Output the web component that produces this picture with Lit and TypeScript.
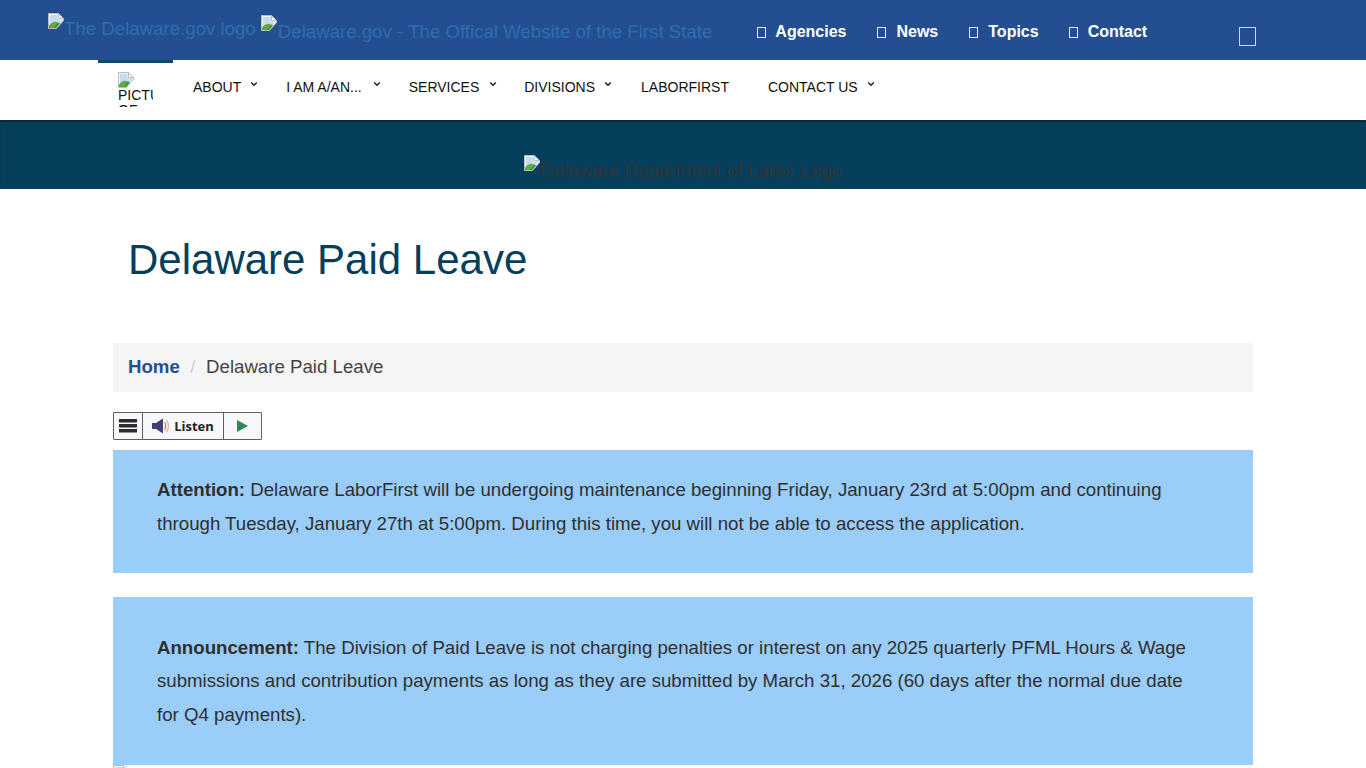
import { html, css, svg, LitElement } from "lit";
import { customElement } from "lit/decorators.js";

const brokenImg = svg`<svg class="broken" width="16" height="16" viewBox="0 0 16 16">
	<path d="M.5 .5H10.5L15.5 5.5V7.5L8.5 15.5H.5Z" fill="#f3f6fa" stroke="#b4bcc6" />
	<path d="M10.5 .5V5.5H15.5Z" fill="#fff" stroke="#b4bcc6" />
	<path d="M2 2H9.5V6.5H14.5V7L9 13L2 12Z" fill="#c6daf2" />
	<path d="M1 15V12.5C4 9 7 8 10 9.5L5 15Z" fill="#5cab3c" />
	<path d="M5 15L10 9.5L12 10.5L8.3 15Z" fill="#3f8f2c" />
</svg>`;

const caret = html`<svg class="caret" width="8" height="6" viewBox="0 0 8 6">
	<path d="M1.2 1.5L4 4.2L6.8 1.5" fill="none" stroke="#222" stroke-width="1.5" />
</svg>`;

const topLinks = ["Agencies", "News", "Topics", "Contact"];

const navItems = [
	{ text: "About", hasCaret: true },
	{ text: "I am a/an...", hasCaret: true },
	{ text: "Services", hasCaret: true },
	{ text: "Divisions", hasCaret: true },
	{ text: "LaborFirst", hasCaret: false },
	{ text: "Contact Us", hasCaret: true },
];

@customElement("app-root")
export class AppRoot extends LitElement {
	static styles = css`
		:host {
			display: block;
			height: 768px;
			overflow: hidden;
			background: #fff;
			font-family: "Liberation Sans", Arial, sans-serif;
			color: #333;
		}
		.broken {
			flex: none;
			display: block;
		}
		.topbar {
			height: 60px;
			background: #234f91;
			display: flex;
			padding-left: 48px;
			box-sizing: border-box;
		}
		.alt-link {
			display: flex;
			align-items: flex-start;
			font-size: 18.667px;
			line-height: 20px;
			color: #2d6cb3;
			white-space: nowrap;
		}
		.alt-one {
			padding-top: 13px;
			margin-right: 5px;
		}
		.alt-one span {
			margin-top: 6px;
		}
		.alt-two {
			padding-top: 15px;
		}
		.alt-two span {
			margin-top: 7px;
			padding-left: 1px;
		}
		.top-links {
			display: flex;
			align-items: center;
			gap: 31px;
			margin-left: 45px;
			height: 60px;
			padding-top: 4px;
			box-sizing: border-box;
		}
		.top-link {
			display: flex;
			align-items: center;
			font-size: 16px;
			font-weight: bold;
			color: #fff;
			white-space: nowrap;
		}
		.top-link:nth-child(4) {
			margin-left: -1px;
		}
		.tofu {
			width: 9px;
			height: 11px;
			border: 1px solid #e4ecf6;
			box-sizing: border-box;
			margin-right: 10px;
		}
		.top-link:first-child .tofu {
			margin-right: 9px;
		}
		.big-tofu {
			width: 17px;
			height: 19px;
			border: 1px solid #c9d8ee;
			box-sizing: border-box;
			margin-left: 92px;
			margin-top: 27px;
		}
		.nav {
			height: 60px;
			background: #fff;
			display: flex;
			padding-left: 98px;
			box-sizing: border-box;
		}
		.logo-cell {
			width: 75px;
			height: 60px;
			border-top: 3px solid #0b4a68;
			box-sizing: border-box;
			margin-right: 20px;
			padding: 9px 20px 0;
			color: #111;
			font-size: 14px;
			line-height: 15px;
		}
		.logo-box {
			width: 35px;
			height: 35px;
			overflow: hidden;
		}
		.nav-items {
			display: flex;
			align-items: center;
			height: 54px;
		}
		.nav-item {
			display: flex;
			align-items: center;
			font-size: 14px;
			color: #111;
			text-transform: uppercase;
			white-space: nowrap;
		}
		.nav-item:nth-child(1) {
			margin-right: 45px;
		}
		.nav-item:nth-child(2) {
			margin-right: 47px;
		}
		.nav-item:nth-child(3) {
			margin-right: 45px;
		}
		.nav-item:nth-child(4) {
			margin-right: 46px;
		}
		.nav-item:nth-child(5) {
			margin-right: 39px;
		}
		.caret {
			margin-left: 9px;
			margin-right: -17px;
			margin-top: -6px;
		}
		.nav-item:nth-child(2) .caret {
			margin-left: 11px;
			margin-right: -19px;
		}
		.nav-item:nth-child(3) .caret {
			margin-left: 10px;
			margin-right: -18px;
		}
		.band {
			height: 69px;
			background: #063f5c;
			box-shadow: inset 0 2px 1px #0a2a3e;
			display: flex;
			justify-content: center;
			align-items: flex-start;
			padding-top: 35px;
			box-sizing: border-box;
			font-size: 18.667px;
			line-height: 20px;
			color: #333;
		}
		.band span {
			margin-top: 6px;
		}
		.main {
			width: 1140px;
			margin-left: 113px;
		}
		h1 {
			margin: 0;
			padding: 47px 15px 0;
			height: 154px;
			box-sizing: border-box;
			font-size: 42px;
			line-height: 48px;
			font-weight: normal;
			color: #063f5c;
		}
		.crumbs {
			height: 49px;
			background: #f5f5f5;
			display: flex;
			align-items: center;
			padding: 0 15px 1px;
			box-sizing: border-box;
			font-size: 18.667px;
			color: #444;
		}
		.crumbs b {
			color: #234f91;
		}
		.sep {
			color: #ccc;
			margin: 0 10.5px;
		}
		.listen {
			display: flex;
			width: 149px;
			height: 28px;
			margin: 20px 0 10px;
			border: 1px solid #5a6068;
			border-radius: 1px;
			box-sizing: border-box;
			background: #f6f8fb;
		}
		.listen > div {
			display: flex;
			align-items: center;
			justify-content: center;
			border-right: 1px solid #5a6068;
			box-sizing: border-box;
		}
		.listen > div:last-child {
			border-right: none;
		}
		.menu-btn {
			width: 29px;
		}
		.say-btn {
			width: 81px;
			gap: 4px;
			font-family: "Open Sans", sans-serif;
			font-size: 13px;
			font-weight: bold;
			color: #222;
		}
		.play-btn {
			flex: 1;
		}
		.notice {
			background: #9bcdf9;
			font-size: 18.667px;
			line-height: 33.6px;
			color: #2f2f2f;
			padding: 23px 44px 33px;
			margin-bottom: 24px;
		}
		.notice.second {
			padding: 33.7px 44px 33.3px;
			margin-bottom: 0;
		}
	`;

	render() {
		return html`
			<div class="topbar">
				<div class="alt-link alt-one">${brokenImg}<span>The Delaware.gov logo</span></div>
				<div class="alt-link alt-two">${brokenImg}<span>Delaware.gov - The Offical Website of the First State</span></div>
				<div class="top-links">
					${topLinks.map(
						(link) => html`<div class="top-link">
							<div class="tofu"></div>
							${link}
						</div>`
					)}
				</div>
				<div class="big-tofu"></div>
			</div>
			<div class="nav">
				<div class="logo-cell">
					<div class="logo-box">${brokenImg}PICTURE OF</div>
				</div>
				<div class="nav-items">
					${navItems.map(
						(item) => html`<div class="nav-item">${item.text}${item.hasCaret ? caret : ""}</div>`
					)}
				</div>
			</div>
			<div class="band">${brokenImg}<span>Delaware Department of Labor Logo</span></div>
			<div class="main">
				<h1>Delaware Paid Leave</h1>
				<div class="crumbs"><b>Home</b><span class="sep">/</span>Delaware Paid Leave</div>
				<div class="listen">
					<div class="menu-btn">
						<svg width="18" height="14" viewBox="0 0 18 14">
							<path d="M0 0H18V3.5H0ZM0 5H18V8.5H0ZM0 10H18V13.5H0Z" fill="#2b2b2b" />
						</svg>
					</div>
					<div class="say-btn">
						<svg width="18" height="16" viewBox="0 0 18 16">
							<path d="M0 5H4L11 .5V15.5L4 11H0Z" fill="#3f3f70" />
							<path d="M12.5 4C14 6.5 14 9.5 12.5 12" fill="none" stroke="#e0704f" stroke-width="1.2" />
							<path d="M14.5 2C17 5.5 17 10.5 14.5 14" fill="none" stroke="#e9a98f" stroke-width="1.2" />
						</svg>
						Listen
					</div>
					<div class="play-btn">
						<svg width="11" height="12" viewBox="0 0 11 12"><path d="M0 0L11 6L0 12Z" fill="#2e8556" /></svg>
					</div>
				</div>
				<div class="notice">
					<b>Attention:</b> Delaware LaborFirst will be undergoing maintenance beginning Friday, January 23rd at 5:00pm and
					continuing through Tuesday, January 27th at 5:00pm. During this time, you will not be able to access the
					application.
				</div>
				<div class="notice second">
					<b>Announcement:</b> The Division of Paid Leave is not charging penalties or interest on any 2025 quarterly PFML
					Hours &amp; Wage submissions and contribution payments as long as they are submitted by March 31, 2026 (60 days
					after the normal due date for Q4 payments).
				</div>
				${brokenImg}
			</div>
		`;
	}
}
